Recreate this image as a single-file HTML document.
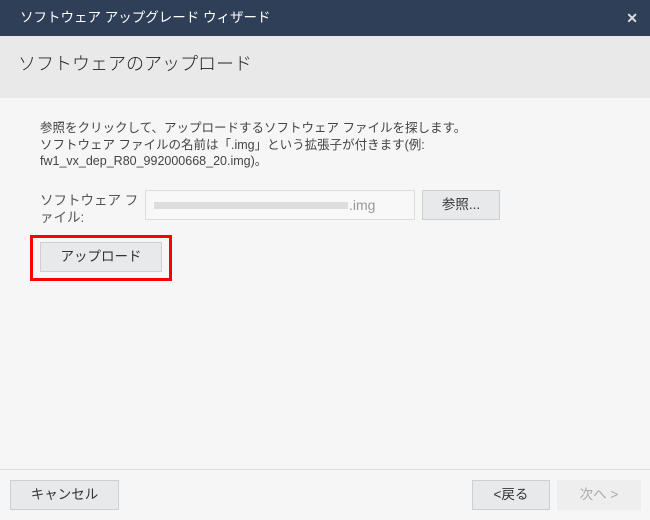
<!DOCTYPE html><html><head><meta charset="utf-8"><style>
body{margin:0;width:650px;height:520px;background:#f6f6f6;font-family:"Liberation Sans","Noto Sans CJK JP",sans-serif;position:relative;overflow:hidden;color:#333}
.a{position:absolute}
.t{left:0;top:0;width:650px;height:36px;background:#2e3f57;color:#fff;font-size:13.5px;line-height:36px}
.h{left:0;top:36px;width:650px;height:62px;background:#e9e9e9;font-size:18px;color:#222}
.btn{position:absolute;background:#e8e9ea;border:1px solid #ccd0d4;box-sizing:border-box;font-size:13.5px;text-align:center;color:#333}
</style></head><body>
<div class="a t"><span style="margin-left:20px">ソフトウェア アップグレード ウィザード</span><span style="position:absolute;right:12px;top:0;font-weight:bold;font-size:14px;color:#ddd">✕</span></div>
<div class="a h"><span style="position:absolute;left:18px;top:14px;font-weight:300">ソフトウェアのアップロード</span></div>
<div class="a" style="left:40px;top:120px;font-size:12.5px;line-height:16.5px;color:#444;width:460px">参照をクリックして、アップロードするソフトウェア ファイルを探します。<br>ソフトウェア ファイルの名前は「.img」という拡張子が付きます(例:<br>fw1_vx_dep_R80_992000668_20.img)。</div>
<div class="a" style="left:40px;top:192px;font-size:13.5px;line-height:17px;color:#555;width:100px">ソフトウェア フ<br>ァイル:</div>
<div class="a" style="left:145px;top:190px;width:270px;height:30px;border:1px solid #ddd;box-sizing:border-box;background:#f8f8f8"><div class="a" style="left:8px;top:11px;width:194px;height:7px;background:#ddd"></div><span class="a" style="left:203px;top:6px;font-size:14px;color:#999">.img</span></div>
<div class="btn" style="left:422px;top:190px;width:78px;height:30px;line-height:28px">参照...</div>
<div class="a" style="left:30px;top:235px;width:142px;height:46px;border:3px solid #f00;box-sizing:border-box"></div>
<div class="btn" style="left:40px;top:242px;width:122px;height:30px;line-height:28px">アップロード</div>
<div class="a" style="left:0;top:469px;width:650px;height:1px;background:#ddd"></div>
<div class="btn" style="left:10px;top:480px;width:109px;height:30px;line-height:28px">キャンセル</div>
<div class="btn" style="left:472px;top:480px;width:78px;height:30px;line-height:28px">&lt;戻る</div>
<div class="btn" style="left:557px;top:480px;width:84px;height:30px;line-height:28px;border-color:#eee;background:#eee;color:#aaa">次へ &gt;</div>
</body></html>
